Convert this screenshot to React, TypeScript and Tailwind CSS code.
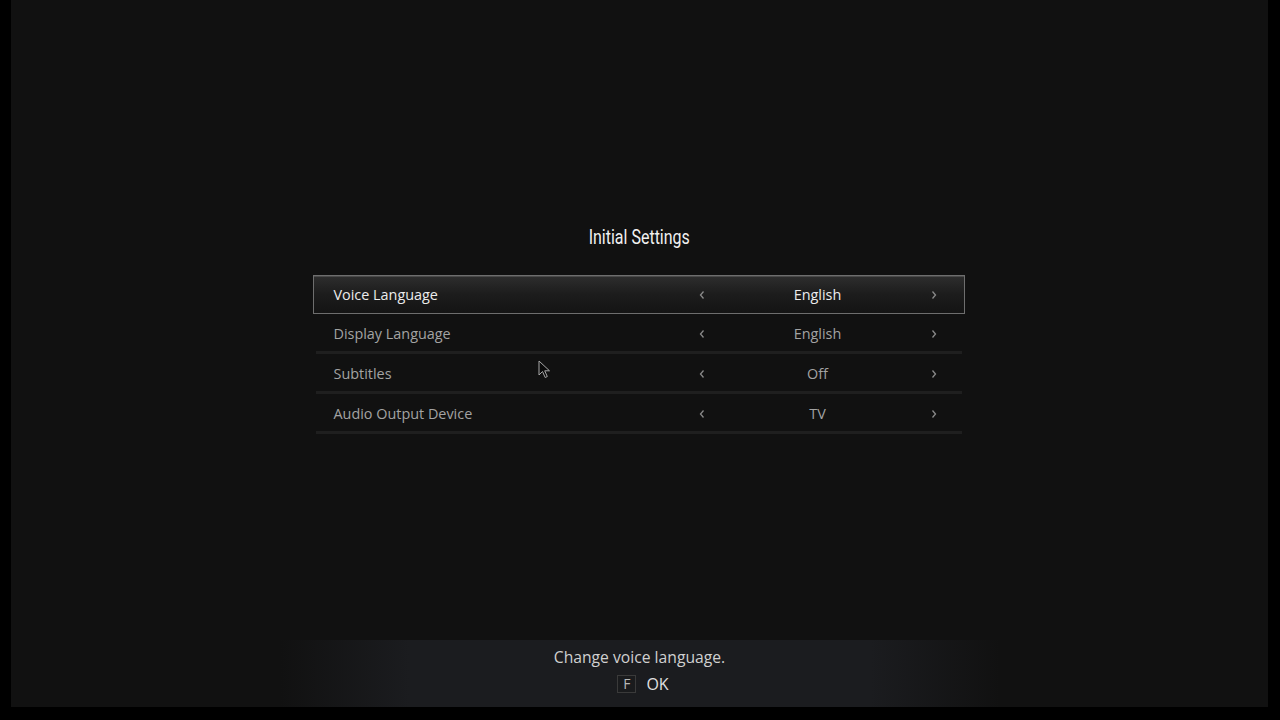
import React from "react";

const rows = [
  { label: "Voice Language", value: "English", selected: true },
  { label: "Display Language", value: "English", selected: false },
  { label: "Subtitles", value: "Off", selected: false },
  { label: "Audio Output Device", value: "TV", selected: false },
];

function Chevron({ dir }: { dir: "left" | "right" }) {
  return (
    <svg width="8" height="10" viewBox="0 0 8 10" className="shrink-0">
      {dir === "left" ? (
        <polyline points="5.5,1.5 2.5,5 5.5,8.5" fill="none" stroke="#8a8a8a" strokeWidth="1.3" />
      ) : (
        <polyline points="2.5,1.5 5.5,5 2.5,8.5" fill="none" stroke="#8a8a8a" strokeWidth="1.3" />
      )}
    </svg>
  );
}

export default function App() {
  return (
    <div className="w-[1280px] h-[720px] bg-black overflow-hidden" style={{ fontFamily: '"Open Sans", "Noto Sans", sans-serif' }}>
      <div className="relative ml-[11px] w-[1257px] h-[707px] bg-[#111111] flex flex-col items-center">
        <div className="mt-[225px] h-[24px] flex items-center justify-center">
          <span
            className="text-[20px] text-[#f0f0f0] scale-x-[0.8] inline-block whitespace-nowrap"
            style={{ fontFamily: 'Roboto, "Liberation Sans", sans-serif' }}
          >
            Initial Settings
          </span>
        </div>

        <div className="mt-[26px] w-[652px] ml-[-2px] flex flex-col">
          {rows.map((r) =>
            r.selected ? (
              <div
                key={r.label}
                className="h-[39px] flex items-center pt-[1px] border border-[#6e6e6e] bg-gradient-to-b from-[#2e2e2e] via-[#1c1c1c] to-[#141414] shadow-[inset_0_1px_0_#4a4a4a]"
              >
                <div className="flex-1 pl-[20px] text-[14.4px] text-[#ececec]">{r.label}</div>
                <div className="w-[240px] mr-[26px] flex items-center">
                  <Chevron dir="left" />
                  <div className="flex-1 text-center text-[14.4px] text-[#ececec]">{r.value}</div>
                  <Chevron dir="right" />
                </div>
              </div>
            ) : (
              <div key={r.label} className="h-[40px] flex flex-col">
                <div className="flex-1 flex items-center pt-[3px]">
                  <div className="flex-1 pl-[21px] text-[14.4px] text-[#a3a3a3]">{r.label}</div>
                  <div className="w-[240px] mr-[27px] flex items-center">
                    <Chevron dir="left" />
                    <div className="flex-1 text-center text-[14.4px] text-[#a3a3a3]">{r.value}</div>
                    <Chevron dir="right" />
                  </div>
                </div>
                <div className="mx-[3px] h-[3px] bg-[#1f1f1f]" />
              </div>
            )
          )}
        </div>

        <div className="mt-auto w-[720px] h-[67px] bg-[linear-gradient(to_right,transparent,#1b1c1f_18%,#1b1c1f_82%,transparent)] flex flex-col items-center pt-[6px]">
          <div className="text-[15.7px] text-[#d0d0d0] leading-[22px]">Change voice language.</div>
          <div className="mt-[6px] flex items-center gap-[10px] ml-[7px]">
            <div className="w-[19px] h-[18px] border border-[#3a3a3a] bg-[#1a1b1d] flex items-center justify-center text-[14px] text-[#b8b8b8] leading-none">
              F
            </div>
            <div className="text-[16px] text-[#e0e0e0] leading-[20px]">OK</div>
          </div>
        </div>

        <svg className="absolute left-[527px] top-[360px]" width="14" height="20" viewBox="0 0 14 20">
          <path d="M1 1 L1 15 L4.5 11.5 L7.2 17.5 L9.3 16.5 L6.7 10.8 L11.5 10.8 Z" fill="#0a0a0a" stroke="#a8a8a8" strokeWidth="1" strokeLinejoin="round" />
        </svg>
      </div>
    </div>
  );
}
